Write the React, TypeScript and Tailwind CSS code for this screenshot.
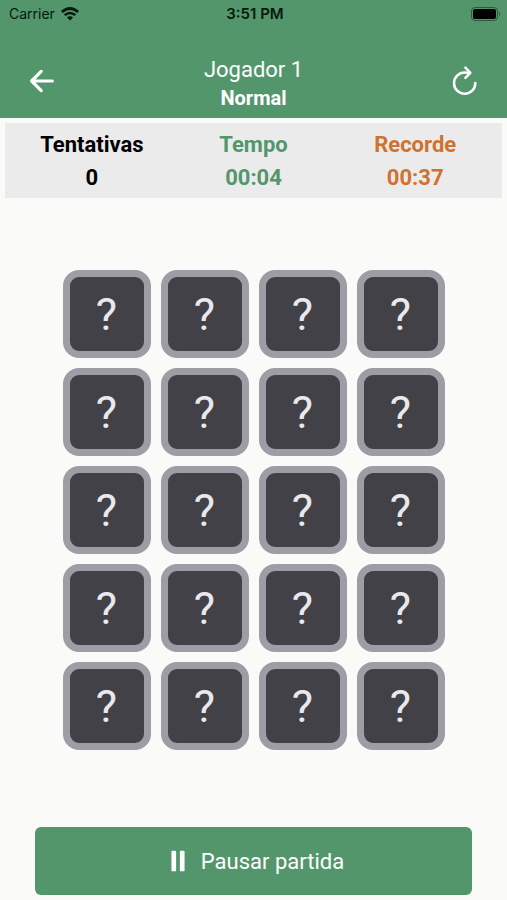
import { IoArrowBack, IoPause } from "react-icons/io5";

const stats = [
  { label: "Tentativas", value: "0", color: "text-black" },
  { label: "Tempo", value: "00:04", color: "text-[#53966c]" },
  { label: "Recorde", value: "00:37", color: "text-[#d0722f]" },
];

const cards = Array.from({ length: 20 }, (_, i) => i + 1);

function WifiIcon() {
  return (
    <svg width="18" height="14" viewBox="0 0 18 14" fill="none" aria-hidden="true">
      <path d="M0.8 5Q9 -2 17.2 5" stroke="currentColor" strokeWidth="2.7" />
      <path d="M3.6 8.2Q9 3.6 14.4 8.2" stroke="currentColor" strokeWidth="2.4" />
      <path d="M9 13.6L6 10.6Q9 8 12 10.6Z" fill="currentColor" />
    </svg>
  );
}

function BatteryIcon() {
  return (
    <svg width="30" height="14" viewBox="0 0 30 14" fill="none" aria-hidden="true">
      <rect x="0.5" y="0.5" width="26" height="13" rx="3.5" stroke="#2c5a3d" />
      <rect x="2" y="2" width="23" height="10" rx="2" fill="black" />
      <path d="M28 4.5Q30 7 28 9.5Z" fill="#2c5a3d" />
    </svg>
  );
}

function RefreshIcon() {
  return (
    <svg
      width="34"
      height="34"
      viewBox="0 0 512 512"
      fill="none"
      stroke="currentColor"
      strokeWidth="38"
      strokeLinecap="round"
      aria-hidden="true"
    >
      <path d="M325 134s-28-6-74-6a160 160 0 10160 160" />
      <path d="M262 54l74 78-74 78" strokeLinejoin="round" />
    </svg>
  );
}

function StatusBar() {
  return (
    <div className="grid grid-cols-3 items-center h-[27px] pl-[9px] pr-1.5 font-['Inter',sans-serif] text-sm text-[#06180d]">
      <div className="flex items-center gap-1.5">
        <span>Carrier</span>
        <WifiIcon />
      </div>
      <span className="text-center text-[15px] font-semibold">3:51 PM</span>
      <div className="flex justify-end">
        <BatteryIcon />
      </div>
    </div>
  );
}

function Header() {
  return (
    <header className="bg-[#53966c]">
      <StatusBar />
      <div className="flex items-center justify-between px-[25px] pt-4 h-[91px] text-white">
        <button type="button" aria-label="Voltar" className="cursor-pointer">
          <IoArrowBack size={34} />
        </button>
        <div className="text-center pt-1.5">
          <h1 className="text-[22px] leading-7">Jogador 1</h1>
          <p className="text-xl leading-7 font-bold">Normal</p>
        </div>
        <button type="button" aria-label="Reiniciar" className="cursor-pointer">
          <RefreshIcon />
        </button>
      </div>
    </header>
  );
}

export default function App() {
  return (
    <div className="flex flex-col min-h-screen bg-[#fafaf8] font-['Roboto',sans-serif]">
      <Header />

      <section className="grid grid-cols-3 mx-[5px] mt-[5px] px-1.5 pt-[5px] pb-1 bg-[#ebebec] text-center text-[22px] leading-[33px] font-bold">
        {stats.map((stat) => (
          <div key={stat.label} className={stat.color}>
            <p>{stat.label}</p>
            <p>{stat.value}</p>
          </div>
        ))}
      </section>

      <main className="flex-1 flex items-center justify-center pb-[5px]">
        <div className="grid grid-cols-4 gap-2.5">
          {cards.map((card) => (
            <button
              key={card}
              type="button"
              aria-label={`Carta ${card}`}
              className="flex items-center justify-center size-22 rounded-2xl border-[7px] border-[#9e9da5] bg-[#424147] text-[45px] leading-none text-[#e9e8ec] cursor-pointer"
            >
              ?
            </button>
          ))}
        </div>
      </main>

      <footer className="px-[35px] pb-[5px]">
        <button
          type="button"
          className="flex items-center justify-center gap-2 w-full h-[68px] rounded-md bg-[#53966c] text-[22px] text-white cursor-pointer"
        >
          <IoPause size={30} />
          Pausar partida
        </button>
      </footer>
    </div>
  );
}
